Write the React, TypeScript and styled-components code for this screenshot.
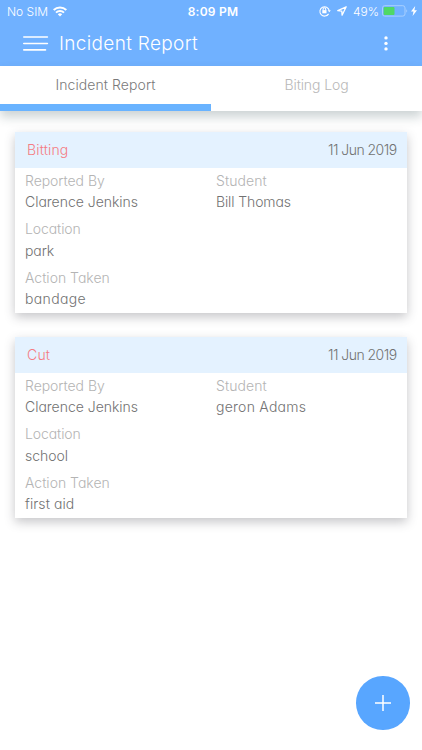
import React from "react";
import styled, { createGlobalStyle } from "styled-components";

const GlobalStyle = createGlobalStyle`
  * { box-sizing: border-box; }
  body { margin: 0; background: #fff; }
`;

const Screen = styled.div`
  position: relative;
  width: 422px;
  height: 750px;
  overflow: hidden;
  background: #fff;
  font-family: Inter, "Open Sans", sans-serif;
  font-feature-settings: "cv11" 1;
  font-weight: 350;
  font-size: 14px;
  color: #727272;
`;

const Header = styled.header`
  height: 66px;
  background: #70b1ff;
  color: #fff;
`;

const StatusBar = styled.div`
  display: grid;
  grid-template-columns: 1fr auto 1fr;
  align-items: center;
  height: 22px;
  padding: 0 5px 0 7px;
  font-size: 12px;
  font-weight: 400;
  letter-spacing: 0;
`;

const Clock = styled.span`
  font-weight: 600;
  letter-spacing: 0.25px;
  padding-left: 2px;
`;

const StatusGroup = styled.div<{ $end?: boolean }>`
  display: flex;
  align-items: center;
  justify-content: ${(p) => (p.$end ? "flex-end" : "flex-start")};
  svg { display: block; flex: none; }
`;

const Carrier = styled.span`
  margin-right: 5px;
  font-weight: 350;
`;

const StatusIcons = styled.span`
  display: flex;
  align-items: center;
  gap: 6px;
`;

const Percent = styled.span`
  margin: 0 3px 0 6px;
  font-weight: 350;
`;

const Power = styled.span`
  display: flex;
  align-items: center;
  gap: 3px;
`;

const NavBar = styled.div`
  display: flex;
  align-items: center;
  height: 43px;
  padding: 0 30px 0 23px;
`;

const IconButton = styled.button`
  display: block;
  padding: 0;
  border: 0;
  background: none;
  color: inherit;
  svg { display: block; }
`;

const Title = styled.h1`
  flex: 1;
  margin: 0 0 0 10px;
  font-size: 19px;
  font-weight: 350;
  line-height: 28px;
  letter-spacing: 0.33px;
`;

const Tabs = styled.nav`
  display: flex;
  height: 45px;
  background: #fff;
  box-shadow: 0 6px 10px rgba(40, 70, 75, 0.24);
`;

const Tab = styled.button<{ $active?: boolean }>`
  flex: 1;
  padding: 0 0 ${(p) => (p.$active ? 1 : 8)}px;
  border: 0;
  border-bottom: ${(p) => (p.$active ? "7px solid #69b3ff" : "0")};
  background: none;
  color: ${(p) => (p.$active ? "#7a7a7a" : "#b8b8b8")};
  font: inherit;
  font-feature-settings: inherit;
`;

const Label = styled.span<{ $track?: number }>`
  letter-spacing: ${(p) => p.$track ?? 0}px;
  white-space: nowrap;
`;

const List = styled.main`
  display: flex;
  flex-direction: column;
  gap: 24px;
  padding: 21px 15px 0 14.5px;
`;

const Card = styled.article`
  height: 181px;
  background: #fff;
  box-shadow: 0 4px 10px rgba(50, 50, 60, 0.28);
`;

const CardHeader = styled.header`
  display: flex;
  align-items: center;
  justify-content: space-between;
  height: 35.5px;
  padding: 0 10.5px 0 12.5px;
  background: #e4f2ff;
`;

const Kind = styled(Label)`
  color: #f57c83;
`;

const Fields = styled.div`
  display: grid;
  grid-template-columns: 191px 1fr;
  grid-auto-rows: 48.8px;
  padding: 2.2px 11px 0 10.5px;
`;

const Field = styled.div<{ $wide?: boolean }>`
  display: flex;
  flex-direction: column;
  grid-column: ${(p) => (p.$wide ? "1 / -1" : "auto")};
  line-height: 21.2px;
`;

const Caption = styled(Label)`
  color: #b4b4b4;
`;

const AddButton = styled.button`
  position: absolute;
  right: 12.5px;
  bottom: 20.5px;
  display: grid;
  place-items: center;
  width: 53.5px;
  height: 53.5px;
  padding: 0;
  border: 0;
  border-radius: 50%;
  background: #58a6ff;
`;

const WifiIcon = () => (
  <svg width="14" height="11" viewBox="0 0 14 11" fill="none" stroke="#fff" strokeWidth="2">
    <path d="M.7 4a9 9 0 0 1 12.6 0M3 6.6a5.8 5.8 0 0 1 8 0" />
    <path d="M4.8 8.3a3.1 3.1 0 0 1 4.4 0L7 10.6z" fill="#fff" stroke="none" />
  </svg>
);

const LockIcon = () => (
  <svg width="12" height="12" viewBox="0 0 12 12" fill="none" stroke="#fff" strokeWidth="1.05">
    <path d="M9.6 8.9A4.7 4.7 0 1 1 10.2 5.4" />
    <path d="M8.7 5.2h3.1L10.3 7.3z" fill="#fff" stroke="none" />
    <rect x="3.3" y="5.1" width="4.2" height="3.2" fill="#fff" stroke="none" />
    <path d="M4.1 5.2V4.1a1.3 1.3 0 0 1 2.6 0v1.1" />
  </svg>
);

const LocationIcon = () => (
  <svg width="10" height="10" viewBox="0 0 10 10" fill="none" stroke="#fff" strokeWidth="1.3" strokeLinejoin="round">
    <path d="M9.2.8.8 4.7l4 .4.3 4.1z" />
  </svg>
);

const BatteryIcon = () => (
  <svg width="26" height="12" viewBox="0 0 26 12">
    <rect x=".5" y=".7" width="22.5" height="10.4" rx="2.2" fill="none" stroke="#a9d0ff" />
    <rect x="1.7" y="1.9" width="10.8" height="8" rx="1" fill="#4fd866" />
    <path d="M24.3 4.2c1.2.4 1.2 3 0 3.4z" fill="#a9d0ff" />
  </svg>
);

const BoltIcon = () => (
  <svg width="6" height="10" viewBox="0 0 6 10">
    <path d="M4.2 0 0 5.5h2.5L1.6 10 6 4.2H3.4z" fill="#fff" />
  </svg>
);

const MenuIcon = () => (
  <svg width="26" height="16" viewBox="0 0 26 16" stroke="#fff" strokeWidth="1.6" strokeLinecap="round">
    <path d="M.8 1h23.6M.8 7.5h23.6M.8 13.9h21.7" />
  </svg>
);

const MoreIcon = () => (
  <svg width="12" height="18" viewBox="0 0 12 18" fill="#fff">
    <circle cx="6" cy="2.9" r="1.7" />
    <circle cx="6" cy="8.4" r="1.7" />
    <circle cx="6" cy="13.9" r="1.7" />
  </svg>
);

const PlusIcon = () => (
  <svg width="18" height="18" viewBox="0 0 18 18" stroke="#fff" strokeWidth="1.5">
    <path d="M9 1v16M1 9h16" />
  </svg>
);

type Item = { text: string; track: number };
type Incident = { kind: Item; reporter: Item; student: Item; location: Item; action: Item };

const incidents: Incident[] = [
  {
    kind: { text: "Bitting", track: 0.15 },
    reporter: { text: "Clarence Jenkins", track: -0.02 },
    student: { text: "Bill Thomas", track: -0.12 },
    location: { text: "park", track: -0.1 },
    action: { text: "bandage", track: 0.35 },
  },
  {
    kind: { text: "Cut", track: 0.2 },
    reporter: { text: "Clarence Jenkins", track: -0.02 },
    student: { text: "geron Adams", track: 0.25 },
    location: { text: "school", track: -0.05 },
    action: { text: "first aid", track: 0.08 },
  },
];

const DataField = ({ name, track, value, wide }: { name: string; track: number; value: Item; wide?: boolean }) => (
  <Field $wide={wide}>
    <Caption $track={track}>{name}</Caption>
    <Label $track={value.track}>{value.text}</Label>
  </Field>
);

export default function App() {
  return (
    <Screen>
      <GlobalStyle />
      <Header>
        <StatusBar>
          <StatusGroup>
            <Carrier>No SIM</Carrier>
            <WifiIcon />
          </StatusGroup>
          <Clock>8:09 PM</Clock>
          <StatusGroup $end>
            <StatusIcons>
              <LockIcon />
              <LocationIcon />
            </StatusIcons>
            <Percent>49%</Percent>
            <Power>
              <BatteryIcon />
              <BoltIcon />
            </Power>
          </StatusGroup>
        </StatusBar>
        <NavBar>
          <IconButton aria-label="Menu"><MenuIcon /></IconButton>
          <Title>Incident Report</Title>
          <IconButton aria-label="More"><MoreIcon /></IconButton>
        </NavBar>
      </Header>
      <Tabs>
        <Tab $active><Label $track={0.08}>Incident Report</Label></Tab>
        <Tab><Label $track={-0.1}>Biting Log</Label></Tab>
      </Tabs>
      <List>
        {incidents.map((item) => (
          <Card key={item.kind.text}>
            <CardHeader>
              <Kind $track={item.kind.track}>{item.kind.text}</Kind>
              <Label $track={-0.55}>11 Jun 2019</Label>
            </CardHeader>
            <Fields>
              <DataField name="Reported By" track={-0.05} value={item.reporter} />
              <DataField name="Student" track={0.08} value={item.student} />
              <DataField name="Location" track={-0.1} value={item.location} wide />
              <DataField name="Action Taken" track={0} value={item.action} wide />
            </Fields>
          </Card>
        ))}
      </List>
      <AddButton aria-label="Add"><PlusIcon /></AddButton>
    </Screen>
  );
}
